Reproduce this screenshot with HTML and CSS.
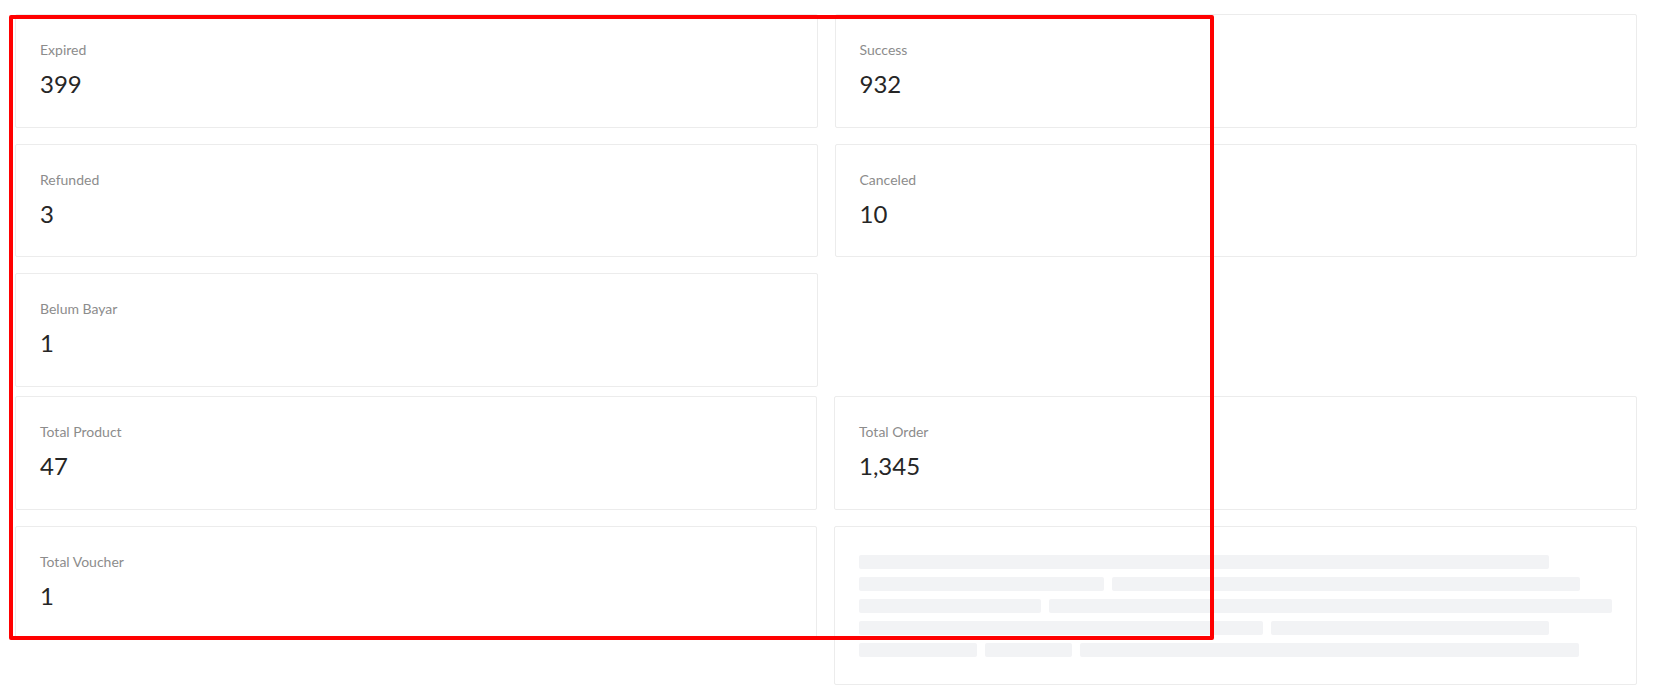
FILE: index.html
```html
<!DOCTYPE html>
<html lang="en">
<head>
<meta charset="utf-8">
<title>Dashboard</title>
<link rel="stylesheet" href="styles.css">
</head>
<body>
<div class="page">
  <div class="grid">
    <div class="card">
      <div class="stat-title">Expired</div>
      <div class="stat-value">399</div>
    </div>
    <div class="card">
      <div class="stat-title">Success</div>
      <div class="stat-value">932</div>
    </div>
    <div class="card">
      <div class="stat-title">Refunded</div>
      <div class="stat-value">3</div>
    </div>
    <div class="card">
      <div class="stat-title">Canceled</div>
      <div class="stat-value">10</div>
    </div>
    <div class="card">
      <div class="stat-title">Belum Bayar</div>
      <div class="stat-value">1</div>
    </div>
  </div>

  <div class="grid grid-totals">
    <div class="card">
      <div class="stat-title">Total Product</div>
      <div class="stat-value">47</div>
    </div>
    <div class="card">
      <div class="stat-title">Total Order</div>
      <div class="stat-value">1,345</div>
    </div>
    <div class="card">
      <div class="stat-title">Total Voucher</div>
      <div class="stat-value">1</div>
    </div>
    <div class="card">
      <div class="skeleton">
        <div class="sk-row"><span class="sk-bar" style="width:690px"></span></div>
        <div class="sk-row"><span class="sk-bar" style="width:245px"></span><span class="sk-bar" style="width:468px"></span></div>
        <div class="sk-row"><span class="sk-bar" style="width:182px"></span><span class="sk-bar" style="width:563px"></span></div>
        <div class="sk-row"><span class="sk-bar" style="width:404px"></span><span class="sk-bar" style="width:278px"></span></div>
        <div class="sk-row"><span class="sk-bar" style="width:118px"></span><span class="sk-bar" style="width:87px"></span><span class="sk-bar" style="width:499px"></span></div>
      </div>
    </div>
  </div>

  <div class="highlight"></div>
</div>
</body>
</html>
```

FILE: styles.css
```css
* {
  box-sizing: border-box;
}

html, body {
  margin: 0;
  padding: 0;
  background: #ffffff;
}

body {
  font-family: "Segoe UI", Lato, "Open Sans", sans-serif;
  color: #262626;
}

.page {
  position: relative;
  padding: 14px 17px 0 15px;
  min-height: 700px;
}

.grid {
  display: grid;
  grid-template-columns: 1fr 1fr;
  column-gap: 17px;
  row-gap: 16px;
  align-items: start;
}

.grid-totals {
  margin-top: 9px;
}

.card {
  background: #ffffff;
  border: 1px solid #ececec;
  border-radius: 2px;
  padding: 24px;
}

.stat-title {
  font-size: 14px;
  line-height: 22px;
  color: #8c8c8c;
  margin-bottom: 4px;
}

.stat-value {
  font-size: 24px;
  line-height: 37.7px;
  color: #262626;
}

.skeleton {
  padding: 4px 0 3px 0;
  display: flex;
  flex-direction: column;
  gap: 8px;
}

.sk-row {
  display: flex;
  gap: 8px;
}

.sk-bar {
  display: block;
  height: 14px;
  border-radius: 2px;
  background: #f2f3f5;
}

.highlight {
  position: absolute;
  left: 9px;
  top: 15px;
  width: 1205px;
  height: 625px;
  border: 4px solid #ff0000;
  border-radius: 2px;
  pointer-events: none;
}
```
